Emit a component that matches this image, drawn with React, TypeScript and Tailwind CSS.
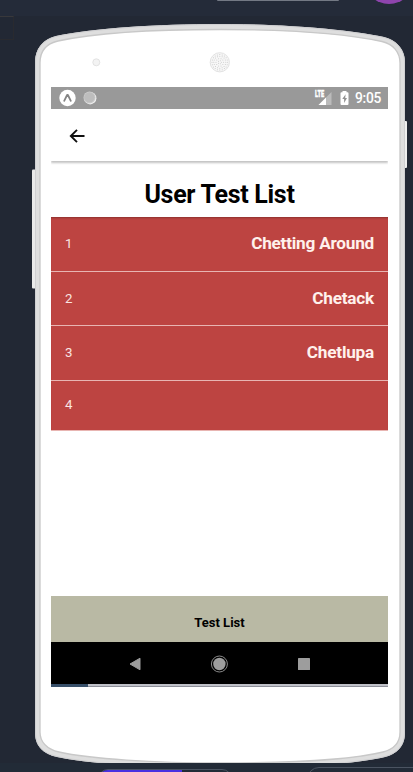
import React from "react";

const rows = [
  { id: 1, name: "Chetting Around", size: "h-[55px]" },
  { id: 2, name: "Chetack", size: "h-[54px]" },
  { id: 3, name: "Chetlupa", size: "h-[55px]" },
  { id: 4, name: "", size: "h-[50px] pb-px" },
];

const speakerRings = [
  { r: 1.6, n: 5 },
  { r: 3.8, n: 10 },
  { r: 6, n: 16 },
  { r: 7.8, n: 20 },
];

function DeviceFrame() {
  return (
    <svg className="absolute inset-0" width="413" height="747" viewBox="0 16 413 747" aria-hidden="true">
      <rect x="32" y="169.500" width="5" height="119" rx="1" fill="#e9e9e9" />
      <rect x="403" y="121" width="4" height="47" rx="1" fill="#efefef" />
      <path
        d="M35 62 C35 49 43 39 56 36 C94 28 157 24 220 24 C283 24 346 29 384 37 C397 40 405 50 405 62 V733 C405 746 397 754 385 757 C351 765 285 768 220 768 C155 768 89 764 57 757 C43 754 35 746 35 733 Z"
        fill="#dedede"
      />
      <path
        d="M35.500 62 C35.500 49 43 39.500 56 36.500 C94 28.500 157 24.500 220 24.500 C283 24.500 346 29.500 384 37.500 C397 40.500 404.500 50 404.500 62 V733 C404.500 746 397 753.500 385 756.500 C351 764.500 285 767.500 220 767.500 C155 767.500 89 763.500 57 756.500 C43 753.500 35.500 746 35.500 733 Z"
        fill="none"
        stroke="#cfcfd1"
      />
      <path
        d="M40 63 C40 51 47 43.500 58 41 C95 33 157 29.500 220 29.500 C283 29.500 345 33.500 382 41.500 C393 44 400 52 400 63 V732 C400 743 393 749.500 383 752 C350 760 285 763 220 763 C155 763 90 759 59 752 C47 749.500 40 742 40 732 Z"
        fill="#fff"
        stroke="#c8c8c8"
        strokeWidth="1.3"
      />
      <circle cx="96.300" cy="62.300" r="3.500" fill="#f3f3f3" stroke="#e3e3e3" />
      <circle cx="219.800" cy="62.300" r="9.600" fill="#f7f7f7" stroke="#e2e2e2" strokeWidth="1" />
      {speakerRings.map((ring) =>
        Array.from({ length: ring.n }, (_, i) => {
          const a = (i / ring.n) * Math.PI * 2;
          return (
            <circle
              key={`${ring.n}-${i}`}
              cx={219.8 + Math.cos(a) * ring.r}
              cy={62.3 + Math.sin(a) * ring.r}
              r="0.5"
              fill="#c6c6c6"
            />
          );
        }),
      )}
    </svg>
  );
}

function StatusBar() {
  return (
    <div className="flex h-[22px] shrink-0 items-center bg-[#999999] text-white">
      <svg className="ml-2" width="17" height="22" viewBox="0 0 17 22">
        <circle cx="8.500" cy="11" r="8.200" fill="#fff" />
        <path d="M5.200 13.800 L8.100 8 H8.900 L11.800 13.800" fill="none" stroke="#858585" strokeWidth="1.800" strokeLinecap="round" strokeLinejoin="round" />
      </svg>
      <svg className="ml-[7px]" width="14" height="22" viewBox="0 0 14 22">
        <circle cx="7.200" cy="11.200" r="6.200" fill="#eeeeee" />
        <circle cx="6.500" cy="10.500" r="6" fill="#cccccc" />
        <circle cx="6.400" cy="10.400" r="5.200" fill="#bdbdbd" />
      </svg>
      <div className="relative ml-auto h-[22px] w-[18px]">
        <svg className="absolute inset-0" width="18" height="22" viewBox="0 0 18 22">
          <path d="M17.500 5 V18 H4.500 Z" fill="#bbbbbb" />
          <path d="M12 10.500 V18 H4.500 Z" fill="#fff" />
        </svg>
        <span className="absolute left-[0.5px] top-[3px] origin-left scale-x-[.62] text-[9px] font-black leading-[8px] [-webkit-text-stroke:0.4px_white]">
          LTE
        </span>
      </div>
      <svg className="ml-2" width="9" height="22" viewBox="0 0 9 22">
        <path d="M2.500 4 h4 v1.300 h1 q1 0 1 1 V17 q0 1 -1 1 h-6 q-1 0 -1 -1 V6.300 q0 -1 1 -1 h1 Z" fill="#fff" />
        <path d="M5.600 7.300 L2.300 12 H4.100 V16 L7 11 H5.200 Z" fill="#929292" />
      </svg>
      <span className="ml-[6px] mr-[7px] w-[26px] whitespace-nowrap text-[13.8px] font-medium leading-[22px] tracking-[-0.3px]">9:05</span>
    </div>
  );
}

function NavigationBar() {
  return (
    <div className="h-[42px] shrink-0 bg-black">
      <svg width="337" height="42" viewBox="0 0 337 42">
        <path d="M89 16.200 V27.800 L79 22 Z" fill="#9b9b9b" stroke="#9b9b9b" strokeWidth="1" strokeLinejoin="round" />
        <circle cx="168.400" cy="22" r="8" fill="none" stroke="#999" strokeWidth="0.900" />
        <circle cx="168.400" cy="22" r="6.200" fill="#9d9d9d" />
        <rect x="247" y="16" width="12" height="12" rx="0.600" fill="#9d9d9d" />
      </svg>
    </div>
  );
}

export default function App() {
  return (
    <div className="flex h-[772px] w-[413px] flex-col overflow-hidden bg-[#222834] font-[Roboto,sans-serif]">
      <div className="flex h-4 shrink-0 items-start overflow-hidden bg-[#242b39]">
        <div className="ml-[217px] h-px w-[122px] shrink-0 rounded-b bg-[#737984]" />
        <div className="-mt-[46px] ml-[25px] h-[50px] w-[50px] shrink-0 rounded-full bg-[#8e44ad]" />
      </div>
      <div className="relative flex h-[747px] shrink-0 flex-col overflow-hidden">
        <div className="h-6 w-3.5 border-b border-r border-t border-[#292a2f] border-t-[#38383b]" />
        <DeviceFrame />
        <div className="relative ml-[51px] mt-[47px] flex h-[600px] w-[337px] flex-col bg-white">
          <StatusBar />
          <div className="relative z-10 flex h-[52px] shrink-0 items-center bg-white shadow-[0_2px_2px_rgba(0,0,0,.24)] [clip-path:inset(0_0_-5px_0)]">
            <svg className="ml-[18px] mt-px" width="17" height="16" viewBox="0 0 17 16">
              <path d="M15.500 8 H2 M8 1.800 L1.800 8 L8 14.200" fill="none" stroke="#111" strokeWidth="1.900" />
            </svg>
          </div>
          <h1 className="flex h-[56px] shrink-0 items-center justify-center pt-[11px] text-[25px] font-bold leading-7 tracking-[-0.3px] text-black">
            User Test List
          </h1>
          <div className="shrink-0 bg-[#bd4441] shadow-[inset_0_2px_2px_-1px_#8d302e]">
            {rows.map((row) => (
              <div
                key={row.id}
                className={`flex items-center justify-between border-b border-[#e8b5b2] px-3.5 text-white ${row.size}`}
              >
                <span className="text-[13.3px] text-[#fae6e2]">{row.id}</span>
                <span className="text-[17.2px] font-bold tracking-[-0.23px] text-[#fff1ec]">{row.name}</span>
              </div>
            ))}
          </div>
          <div className="mt-auto flex h-[46px] shrink-0 items-center justify-center bg-[#b9b9a4] pt-[7px] text-[13px] font-bold text-black">
            Test List
          </div>
          <NavigationBar />
          <div className="h-[3px] shrink-0 border-b border-[#8d8f99] bg-[#c0c1c8]">
            <div className="h-[3px] w-[37px] bg-[#374f69]" />
          </div>
        </div>
      </div>
      <div className="relative h-[9px] shrink-0 overflow-hidden bg-[#222b37]">
        <div className="absolute left-[98px] top-[6px] h-8 w-[134px] overflow-hidden rounded-[10px] border border-[#4b5461]">
          <div className="-ml-px -mt-px h-8 w-[84px] border-t border-[#6554ee] bg-[#4930e2]" />
        </div>
        <div className="absolute left-[307px] top-[4px] h-8 w-[118px] rounded-[12px] border border-[#4b5461]" />
      </div>
    </div>
  );
}
